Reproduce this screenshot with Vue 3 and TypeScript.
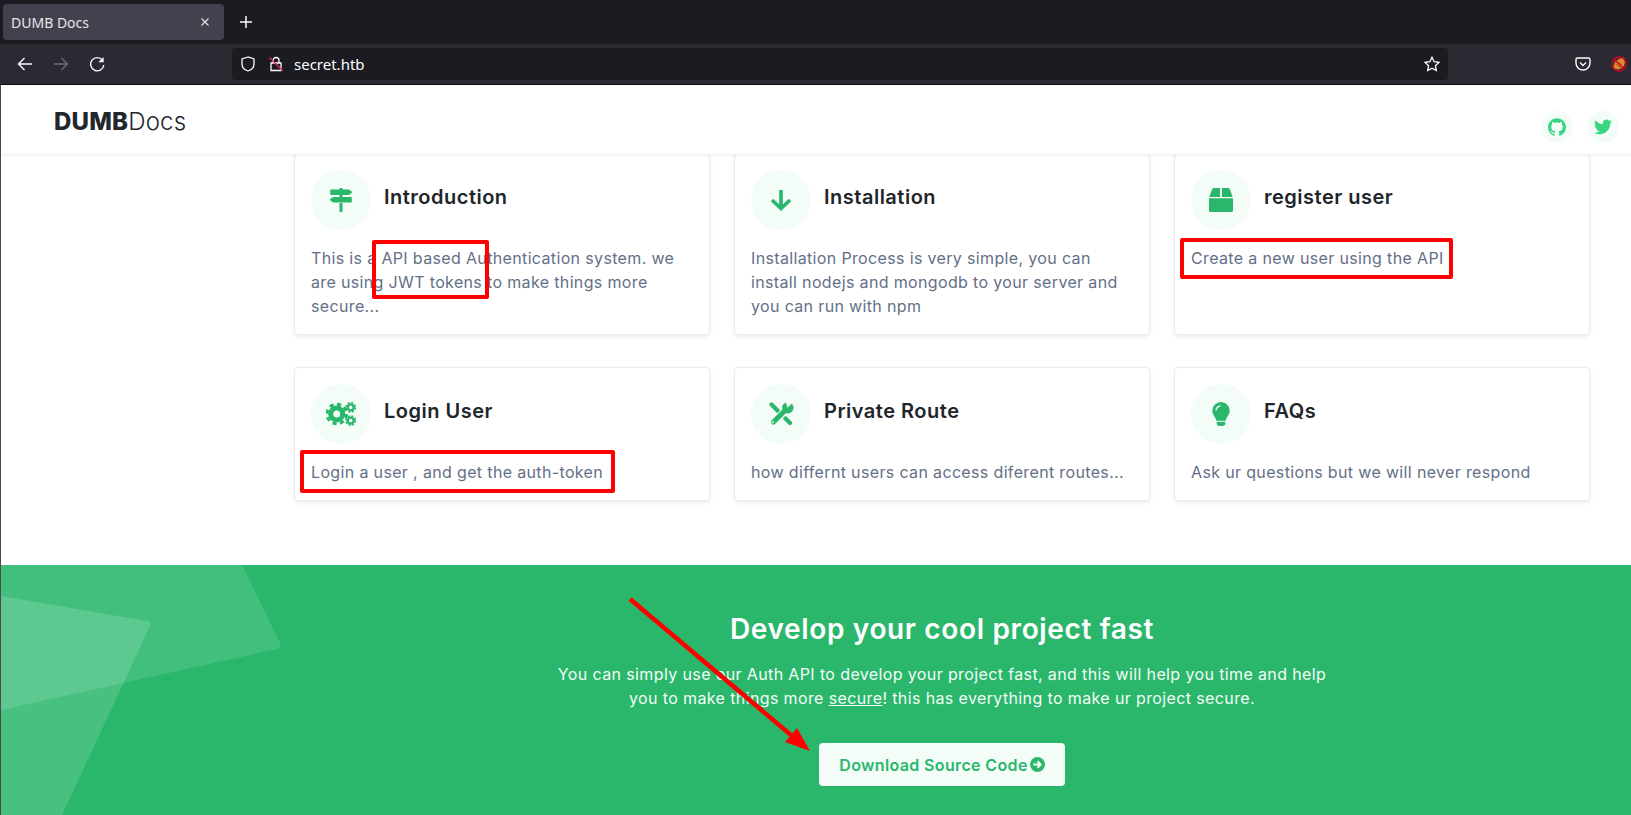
<template>
  <div class="window">
    <div class="tabbar">
      <div class="tab">
        <span class="tab-title">DUMB Docs</span>
        <svg class="tab-close" width="10" height="10" viewBox="0 0 10 10"><path d="M1.5 1.5l7 7M8.5 1.5l-7 7" /></svg>
      </div>
      <svg class="new-tab" width="14" height="14" viewBox="0 0 14 14"><path d="M7 1v12M1 7h12" /></svg>
    </div>

    <div class="toolbar">
      <div class="nav-btn">
        <svg width="16" height="16" viewBox="0 0 16 16"><path d="M15 8H1.5M7.5 2L1.5 8l6 6" /></svg>
      </div>
      <div class="nav-btn muted">
        <svg width="16" height="16" viewBox="0 0 16 16"><path d="M1 8h13.5M8.5 2l6 6-6 6" /></svg>
      </div>
      <div class="nav-btn">
        <svg width="16" height="16" viewBox="0 0 16 16"><path d="M13.5 4.2A6.6 6.6 0 1 0 14.8 9" /><path class="solid" d="M14.6 1v5.2H9.4z" /></svg>
      </div>
      <div class="urlbar">
        <svg class="shield" width="16" height="16" viewBox="0 0 16 16"><path d="M8 1L2 3v5c0 3.4 2.6 5.9 6 7 3.4-1.1 6-3.600 6-7V3z" /></svg>
        <svg class="lock" width="16" height="16" viewBox="0 0 16 16">
          <path d="M5 7V4.500a3 3 0 0 1 6 0V7M3 7h10v7.500H3z" />
          <path class="slash" d="M1.500 1.500l13 13" />
        </svg>
        <span class="url">secret.htb</span>
        <svg class="star" width="16" height="16" viewBox="0 0 16 16"><path d="M8 1.200l2.100 4.500 4.900.6-3.600 3.400.9 4.900L8 12.200l-4.300 2.400.9-4.900L1 6.300l4.900-.6z" /></svg>
      </div>
      <svg class="pocket" width="16" height="16" viewBox="0 0 16 16">
        <path d="M2.500 2h11A1.500 1.500 0 0 1 15 3.500V7a7 7 0 0 1-14 0V3.500A1.500 1.500 0 0 1 2.500 2z" />
        <path d="M5 6.500l3 3 3-3" />
      </svg>
      <svg class="ext" width="16" height="16" viewBox="0 0 16 16">
        <circle class="ext-bg" cx="8" cy="8" r="7" />
        <path class="fox" d="M2 12l2-6 4-3 5-1.500 1 5-2 5-5 2z" />
        <path class="fox-dark" d="M5 8l4 3M7 6l4 3" />
        <circle class="ban" cx="8" cy="8" r="7" />
        <path class="ban" d="M3 3l10 10" />
      </svg>
    </div>

    <div class="page">
      <header class="site-header">
        <div class="logo"><b>DUMB</b><span>Docs</span></div>
        <div class="socials">
          <span class="social">
            <svg width="18" height="18" viewBox="0 0 24 24"><path d="M12 .297c-6.63 0-12 5.373-12 12 0 5.303 3.438 9.8 8.205 11.385.6.113.82-.258.82-.577 0-.285-.01-1.04-.015-2.04-3.338.724-4.042-1.61-4.042-1.61C4.422 18.07 3.633 17.7 3.633 17.7c-1.087-.744.084-.729.084-.729 1.205.084 1.838 1.236 1.838 1.236 1.07 1.835 2.809 1.305 3.495.998.108-.776.417-1.305.76-1.605-2.665-.3-5.466-1.332-5.466-5.93 0-1.31.465-2.38 1.235-3.22-.135-.303-.54-1.523.105-3.176 0 0 1.005-.322 3.3 1.23.96-.267 1.98-.399 3-.405 1.02.006 2.04.138 3 .405 2.28-1.552 3.285-1.23 3.285-1.23.645 1.653.24 2.873.12 3.176.765.84 1.23 1.91 1.23 3.22 0 4.61-2.805 5.625-5.475 5.92.42.36.81 1.096.81 2.22 0 1.606-.015 2.896-.015 3.286 0 .315.21.69.825.57C20.565 22.092 24 17.592 24 12.297c0-6.627-5.373-12-12-12" /></svg>
          </span>
          <span class="social">
            <svg width="18" height="18" viewBox="0 0 24 24"><path d="M23.953 4.57a10 10 0 01-2.825.775 4.958 4.958 0 002.163-2.723c-.951.555-2.005.959-3.127 1.184a4.92 4.92 0 00-8.384 4.482C7.69 8.095 4.067 6.13 1.64 3.162a4.822 4.822 0 00-.666 2.475c0 1.71.87 3.213 2.188 4.096a4.904 4.904 0 01-2.228-.616v.06a4.923 4.923 0 003.946 4.827 4.996 4.996 0 01-2.212.085 4.936 4.936 0 004.604 3.417 9.867 9.867 0 01-6.102 2.105c-.39 0-.779-.023-1.17-.067a13.995 13.995 0 007.557 2.209c9.053 0 13.998-7.496 13.998-13.985 0-.21 0-.42-.015-.63A9.935 9.935 0 0024 4.59z" /></svg>
          </span>
        </div>
      </header>

      <main class="cards">
        <article v-for="card in cards" :key="card.title" class="card">
          <div class="card-head">
            <div class="card-icon">
              <svg v-if="card.icon === 'sign'" width="24" height="24" viewBox="0 0 24 24">
                <path d="M10.500 0h3v2h-3zM10.500 7h3v2h-3zM10.500 15h3v9h-3z" />
                <path d="M2 1.500h18l3.500 2.750L20 7H2a.8.8 0 0 1-.8-.8V2.300A.8.8 0 0 1 2 1.500zM4 9h18a.8.8 0 0 1 .8.8v3.900a.8.8 0 0 1-.8.8H4L.5 11.750z" />
              </svg>
              <svg v-else-if="card.icon === 'down'" width="22" height="22" viewBox="0 0 22 22">
                <path class="stroke" d="M11 1v18M2 11l9 8.500 9-8.500" />
              </svg>
              <svg v-else-if="card.icon === 'box'" width="24" height="24" viewBox="0 0 24 24">
                <path d="M.3 9L3 1.400Q3.500 0 5 0h6v9zM13 0h6q1.500 0 2 1.400L23.700 9H13zM0 10.200h24v12.300a1.500 1.500 0 0 1-1.500 1.500h-21A1.500 1.500 0 0 1 0 22.500z" />
              </svg>
              <svg v-else-if="card.icon === 'gears'" width="30" height="24" viewBox="0 0 30 24">
                <circle class="gear-ring" cx="10.700" cy="12" r="6" stroke-width="5" />
                <circle class="gear-teeth" cx="10.700" cy="12" r="9.800" stroke-width="3" stroke-dasharray="4.200 3.500" />
                <circle class="gear-ring" cx="24.700" cy="5.400" r="3" stroke-width="2.400" />
                <circle class="gear-teeth" cx="24.700" cy="5.400" r="4.700" stroke-width="1.600" stroke-dasharray="2.100 1.590" />
                <circle class="gear-ring" cx="24.700" cy="18.600" r="3" stroke-width="2.400" />
                <circle class="gear-teeth" cx="24.700" cy="18.600" r="4.700" stroke-width="1.600" stroke-dasharray="2.100 1.590" />
              </svg>
              <svg v-else-if="card.icon === 'tools'" width="25" height="24" viewBox="0 0 25 24">
                <path class="tool" d="M2.500 2.500l18.500 18.500" stroke-width="4.200" />
                <path class="tool-gap" d="M5 20L17 8" stroke-width="7.500" />
                <path class="tool" d="M4.500 20L17 7.500" stroke-width="5" />
                <circle cx="18.800" cy="5.800" r="5.700" />
                <path class="tool-cut" d="M18.500 5.800L21 3.300 25 -.7V-3h-6l-2.500 2.500z" />
                <circle class="tool-hole" cx="3.900" cy="20.300" r="1" />
              </svg>
              <svg v-else width="18" height="24" viewBox="0 0 18 24">
                <path d="M9 0a8.700 8.700 0 0 1 8.700 8.700c0 3.800-3 5.600-4 10H4.300c-1-4.400-4-6.200-4-10A8.700 8.700 0 0 1 9 0z" />
                <path d="M4.700 19.800h8.600v1.500A2.700 2.700 0 0 1 10.600 24H7.400a2.700 2.700 0 0 1-2.700-2.700z" />
                <path class="bulb-shine" d="M4 8.500A5 5 0 0 1 8.500 4" />
              </svg>
            </div>
            <h3 class="card-title">{{ card.title }}</h3>
          </div>
          <p class="card-text">{{ card.text }}</p>
        </article>
      </main>

      <section class="cta">
        <svg class="cta-shapes" width="300" height="250" viewBox="0 0 300 250">
          <path class="shape-a" d="M0 0H241L279 78q2 5-3 6L0 145z" />
          <path class="shape-b" d="M0 31L146 56q4 1 3 5L61 250H0z" />
        </svg>
        <h2 class="cta-title">Develop your cool project fast</h2>
        <p class="cta-text">
          You can simply use our Auth API to develop your project fast, and this will help you time and help<br />
          you to make things more <u>secure</u>! this has everything to make ur project secure.
        </p>
        <a class="cta-btn">
          Download Source Code
          <svg width="15" height="15" viewBox="0 0 16 16">
            <circle cx="8" cy="8" r="8" />
            <path class="btn-arrow" d="M3.500 8h8M8 4.500L11.500 8 8 11.500" />
          </svg>
        </a>
      </section>
    </div>

    <!-- markup drawn on top of the screenshot -->
    <div class="mark mark-api"></div>
    <div class="mark mark-register"></div>
    <div class="mark mark-login"></div>
    <svg class="mark-arrow" width="1631" height="815" viewBox="0 0 1631 815">
      <path class="arrow-line" d="M630 599L798 741" />
      <path class="arrow-head" d="M810 751L785 742L797 728z" />
    </svg>
  </div>
</template>

<script setup lang="ts">
interface Card {
  title: string;
  text: string;
  icon: string;
}

const cards: Card[] = [
  {
    title: "Introduction",
    text: "This is a API based Authentication system. we are using JWT tokens to make things more secure...",
    icon: "sign",
  },
  {
    title: "Installation",
    text: "Installation Process is very simple, you can install nodejs and mongodb to your server and you can run with npm",
    icon: "down",
  },
  { title: "register user", text: "Create a new user using the API", icon: "box" },
  { title: "Login User", text: "Login a user , and get the auth-token", icon: "gears" },
  { title: "Private Route", text: "how differnt users can access diferent routes...", icon: "tools" },
  { title: "FAQs", text: "Ask ur questions but we will never respond", icon: "bulb" },
];
</script>

<style scoped>
.window {
  position: relative;
  width: 1631px;
  height: 815px;
  overflow: hidden;
  display: flex;
  flex-direction: column;
  font-family: Inter, "Open Sans", sans-serif;
  background: #fff;
}

.tabbar {
  flex: none;
  height: 44px;
  box-sizing: border-box;
  padding: 4px 0 4px 3px;
  display: flex;
  align-items: center;
  background: #1c1b22;
}

.tab {
  width: 221px;
  height: 36px;
  box-sizing: border-box;
  padding: 0 14px 0 8px;
  display: flex;
  align-items: center;
  justify-content: space-between;
  background: #42414d;
  border-radius: 4px;
}

.tab-title {
  font-family: "Noto Sans", sans-serif;
  font-size: 14px;
  color: #e6e6ea;
}

.tab-close path {
  fill: none;
  stroke: #e6e6ea;
  stroke-width: 1.1;
}

.new-tab {
  margin-left: 15px;
}

.new-tab path {
  fill: none;
  stroke: #fbfbfe;
  stroke-width: 1.5;
}

.toolbar {
  flex: none;
  height: 41px;
  box-sizing: border-box;
  padding: 4px 4px 5px 7px;
  display: flex;
  align-items: center;
  background: #2b2a33;
  border-bottom: 1px solid #0c0c0d;
}

.nav-btn {
  width: 36px;
  height: 32px;
  display: flex;
  align-items: center;
  justify-content: center;
}

.nav-btn svg path {
  fill: none;
  stroke: #fbfbfe;
  stroke-width: 1.4;
}

.nav-btn svg path.solid {
  fill: #fbfbfe;
  stroke: none;
}

.nav-btn.muted svg path {
  stroke: #6d6c75;
}

.urlbar {
  margin-left: 117px;
  width: 1216px;
  height: 32px;
  box-sizing: border-box;
  padding: 0 8px;
  display: flex;
  align-items: center;
  background: #1c1b22;
  border-radius: 4px;
}

.urlbar svg path {
  fill: none;
  stroke: #fbfbfe;
  stroke-width: 1.3;
}

.urlbar svg path.slash {
  stroke: #e22850;
}

.lock {
  margin-left: 12px;
}

.url {
  margin-left: 10px;
  font-family: "Noto Sans", sans-serif;
  font-size: 15px;
  color: #fbfbfe;
}

.star {
  margin-left: auto;
}

.pocket {
  margin-left: auto;
  margin-right: 20px;
}

.pocket path {
  fill: none;
  stroke: #fbfbfe;
  stroke-width: 1.4;
}

.ext-bg {
  fill: #3a3038;
}

.fox {
  fill: #e08a2c;
}

.fox-dark {
  fill: none;
  stroke: #9a5a1a;
  stroke-width: 1;
}

.ban {
  fill: none;
  stroke: #d70022;
  stroke-width: 1.3;
}

.page {
  flex: 1;
  min-height: 0;
  display: flex;
  flex-direction: column;
  border-left: 1px solid #4a4a4f;
}

.site-header {
  position: relative;
  z-index: 2;
  flex: none;
  height: 69px;
  box-sizing: border-box;
  padding: 0 12px 0 53px;
  display: flex;
  align-items: center;
  justify-content: space-between;
  background: #fff;
  box-shadow: 0 1px 4px rgba(0, 0, 0, 0.08);
}

.logo {
  margin-top: 4px;
  font-size: 24px;
  color: #22272e;
  letter-spacing: 0.2px;
}

.logo b {
  font-weight: 800;
}

.logo span {
  font-weight: 300;
}

.socials {
  display: flex;
  gap: 14px;
  margin-top: 14px;
}

.social {
  width: 32px;
  height: 32px;
  display: flex;
  align-items: center;
  justify-content: center;
  border-radius: 50%;
  background: #f3fcf6;
}

.social svg {
  fill: #3ad583;
}

.cards {
  flex: none;
  margin-top: -1px;
  padding: 0 41px 64px 293px;
  display: grid;
  grid-template-columns: repeat(3, 416px);
  column-gap: 24px;
  row-gap: 32px;
}

.card {
  box-sizing: border-box;
  padding: 16px;
  background: #fff;
  border: 1px solid #e9ebee;
  border-radius: 4px;
  box-shadow: 0 2px 5px rgba(0, 0, 0, 0.07);
}

.card-head {
  display: flex;
  align-items: center;
  gap: 13px;
}

.card-icon {
  flex: none;
  width: 60px;
  height: 60px;
  display: flex;
  align-items: center;
  justify-content: center;
  border-radius: 50%;
  background: #f3fcf6;
}

.card-icon svg {
  fill: #2ab76c;
}

.stroke {
  fill: none;
  stroke: #2ab76c;
  stroke-width: 3.600;
}

.gear-ring {
  fill: none;
  stroke: #2ab76c;
}

.gear-teeth {
  fill: none;
  stroke: #2ab76c;
}

.tool {
  fill: none;
  stroke: #2ab76c;
  stroke-linecap: round;
}

.tool-gap {
  fill: none;
  stroke: #f3fcf6;
}

.tool-cut,
.tool-hole {
  fill: #f3fcf6;
}

.bulb-shine {
  fill: none;
  stroke: #f3fcf6;
  stroke-width: 1.300;
}

.card-title {
  margin: 0 0 6px;
  font-size: 20px;
  line-height: 24px;
  font-weight: 600;
  color: #212529;
  letter-spacing: 0.5px;
}

.card-text {
  margin: 16px 0 0;
  font-size: 16px;
  line-height: 24px;
  color: #646f87;
  letter-spacing: 0.35px;
}

.cta {
  position: relative;
  flex: 1;
  box-sizing: border-box;
  padding: 47px 41px 0 293px;
  display: flex;
  flex-direction: column;
  align-items: center;
  text-align: center;
  background: #2ab76c;
  overflow: hidden;
}

.cta-shapes {
  position: absolute;
  left: 0;
  top: 0;
}

.shape-a {
  fill: rgba(255, 255, 255, 0.12);
}

.shape-b {
  fill: rgba(255, 255, 255, 0.14);
}

.cta-title {
  position: relative;
  margin: 0;
  font-size: 28px;
  line-height: 34px;
  font-weight: 600;
  color: #fff;
  letter-spacing: 0.65px;
}

.cta-text {
  position: relative;
  margin: 16px 0 0;
  font-size: 16px;
  line-height: 24px;
  color: #f3fcf6;
  letter-spacing: 0.375px;
}

.cta-btn {
  position: relative;
  margin-top: 33px;
  height: 43px;
  box-sizing: border-box;
  padding: 0 20px;
  display: flex;
  align-items: center;
  gap: 2px;
  font-size: 16px;
  font-weight: 600;
  color: #2ab76c;
  background: #f3fcf6;
  border-radius: 4px;
  letter-spacing: 0.36px;
}

.cta-btn svg {
  fill: #2ab76c;
}

.btn-arrow {
  fill: none;
  stroke: #f3fcf6;
  stroke-width: 2;
}

.mark {
  position: absolute;
  z-index: 3;
  box-sizing: border-box;
  border: 4px solid #f00;
  border-radius: 2px;
}

.mark-api {
  left: 372px;
  top: 240px;
  width: 117px;
  height: 59px;
}

.mark-register {
  left: 1180px;
  top: 238px;
  width: 273px;
  height: 41px;
}

.mark-login {
  left: 300px;
  top: 450px;
  width: 315px;
  height: 43px;
}

.mark-arrow {
  position: absolute;
  z-index: 3;
  left: 0;
  top: 0;
}

.arrow-line {
  fill: none;
  stroke: #f00;
  stroke-width: 4.500;
}

.arrow-head {
  fill: #f00;
}
</style>

<style>
html,
body {
  margin: 0;
  overflow: hidden;
}
</style>
